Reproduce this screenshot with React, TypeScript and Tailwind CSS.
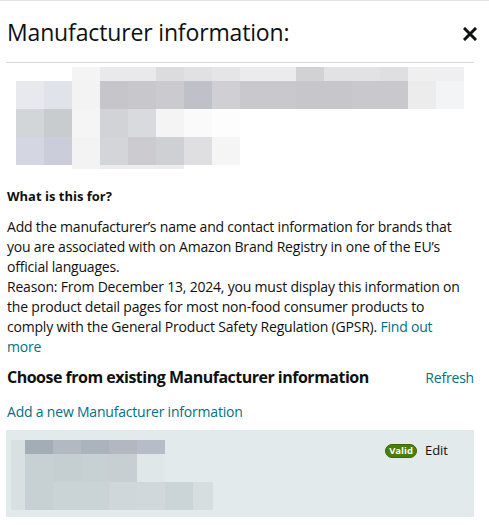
import React from 'react';

type Cell = { w: number; c: string };

// redacted image / text blocks, row by row
const topMosaic: { h: number; offset: number; cells: Cell[] }[] = [
  {
    h: 14,
    offset: 72,
    cells: [
      { w: 28, c: '#f4f4f4' },
      { w: 56, c: '#e9e9eb' },
      { w: 28, c: '#dcdcde' },
      { w: 28, c: '#e1e1e3' },
      { w: 28, c: '#e5e5e7' },
      { w: 56, c: '#ebebed' },
      { w: 28, c: '#d2d2d4' },
      { w: 56, c: '#e2e2e4' },
      { w: 28, c: '#dfdfe1' },
      { w: 28, c: '#efefef' },
      { w: 28, c: '#efeff1' },
    ],
  },
  {
    h: 28,
    offset: 16,
    cells: [
      { w: 28, c: '#e8e9ee' },
      { w: 28, c: '#e1e3eb' },
      { w: 28, c: '#f3f3f3' },
      { w: 28, c: '#c6c6ca' },
      { w: 28, c: '#c8c8cc' },
      { w: 28, c: '#cbcbcf' },
      { w: 28, c: '#c0c0c8' },
      { w: 28, c: '#d0d0d4' },
      { w: 28, c: '#c9c9cd' },
      { w: 28, c: '#c9c9cd' },
      { w: 28, c: '#c7c7cb' },
      { w: 28, c: '#c7c7cb' },
      { w: 28, c: '#c9c9cd' },
      { w: 28, c: '#c9c9cd' },
      { w: 28, c: '#ececec' },
      { w: 28, c: '#f3f4f6' },
    ],
  },
  {
    h: 28,
    offset: 16,
    cells: [
      { w: 28, c: '#d2d6d9' },
      { w: 28, c: '#c8cccf' },
      { w: 28, c: '#f5f5f5' },
      { w: 28, c: '#d2d3d7' },
      { w: 28, c: '#d9dadd' },
      { w: 28, c: '#f4f4f4' },
      { w: 28, c: '#fafafa' },
      { w: 28, c: '#fdfdfd' },
    ],
  },
  {
    h: 28,
    offset: 16,
    cells: [
      { w: 28, c: '#d4d6e2' },
      { w: 28, c: '#cbcddb' },
      { w: 28, c: '#f3f3f3' },
      { w: 28, c: '#d4d5d9' },
      { w: 28, c: '#ccccd0' },
      { w: 28, c: '#cfd0d4' },
      { w: 28, c: '#dfdfe1' },
      { w: 28, c: '#f5f5f5' },
    ],
  },
  {
    h: 4,
    offset: 72,
    cells: [
      { w: 28, c: '#f3f3f3' },
      { w: 84, c: '#ededed' },
    ],
  },
];

const cardMosaic: Cell[][] = [
  [
    { w: 14, c: '#d8e0e0' },
    { w: 28, c: '#a3adb5' },
    { w: 28, c: '#b2b9c1' },
    { w: 28, c: '#abb3bd' },
    { w: 28, c: '#b3b7bf' },
    { w: 28, c: '#b6bdc9' },
  ],
  [
    { w: 14, c: '#d8e0e2' },
    { w: 28, c: '#c7d0d3' },
    { w: 28, c: '#c5ced1' },
    { w: 28, c: '#c7d0d3' },
    { w: 28, c: '#c7cfd2' },
    { w: 28, c: '#dfe7e9' },
  ],
  [
    { w: 14, c: '#d8e0e2' },
    { w: 28, c: '#c7d0d3' },
    { w: 56, c: '#cad3d6' },
    { w: 28, c: '#cfd7da' },
    { w: 28, c: '#d0d8db' },
    { w: 28, c: '#cbd4d7' },
    { w: 20, c: '#d6dee0' },
  ],
];

function MosaicRow({ cells, h }: { cells: Cell[]; h: number }) {
  return (
    <div className="flex">
      {cells.map((cell, i) => (
        <div key={i} style={{ width: cell.w, height: h, background: cell.c }} />
      ))}
    </div>
  );
}

export default function App() {
  return (
    <div
      className="w-[489px] h-[525px] overflow-hidden bg-white border-t border-[#e3e3e3] text-[#0f1111]"
      style={{ fontFamily: '"Open Sans", "Noto Sans", Arial, sans-serif' }}
    >
      <div className="w-[468px] ml-[6px]">
        {/* header */}
        <div className="flex items-center justify-between pt-[15px] pb-[14px] pl-[1px]">
          <h1 className="text-[23px] leading-[32px] font-normal tracking-[-0.15px]">Manufacturer information:</h1>
          <svg width="14" height="14" viewBox="0 0 14 14" className="mr-[-3px] mt-[4px]">
            <path d="M2 2 L12 12 M12 2 L2 12" stroke="#0f1111" strokeWidth="3" strokeLinecap="square" />
          </svg>
        </div>
        <div className="border-t border-[#d5d9d9]" />

        {/* redacted preview */}
        <div className="mt-[4px] flex flex-col">
          {topMosaic.map((row, i) => (
            <div key={i} style={{ paddingLeft: row.offset - 6 }}>
              <MosaicRow cells={row.cells} h={row.h} />
            </div>
          ))}
        </div>

        {/* description */}
        <div className="pl-[1px]">
          <h3 className="mt-[19px] text-[13px] leading-[16px] font-bold">What is this for?</h3>
          <p className="mt-[13px] w-[456px] text-[14px] leading-[20px] tracking-[-0.2px]">
            Add the manufacturer’s name and contact information for brands that you are associated with on Amazon
            Brand Registry in one of the EU’s official languages.
            <br />
            Reason: From December 13, 2024, you must display this information on the product detail pages for most
            non-food consumer products to comply with the General Product Safety Regulation (GPSR).{' '}
            <a className="text-[#007185] cursor-pointer">Find out more</a>
          </p>

          <div className="mt-[9px] flex items-center justify-between">
            <h2 className="text-[16px] leading-[22px] font-bold tracking-[-0.5px]">
              Choose from existing Manufacturer information
            </h2>
            <a className="text-[14px] text-[#007185] tracking-[-0.2px] cursor-pointer">Refresh</a>
          </div>

          <a className="block mt-[14px] text-[14px] leading-[20px] text-[#007185] tracking-[-0.2px] cursor-pointer">
            Add a new Manufacturer information
          </a>
        </div>

        {/* existing entry */}
        <div className="mt-[8px] bg-[#e2eaeb] flex justify-between pl-[5px] pt-[10px] pb-[7px] pr-[26px]">
          <div className="flex flex-col">
            {cardMosaic.map((row, i) => (
              <MosaicRow key={i} cells={row} h={i === 0 ? 14 : 28} />
            ))}
          </div>
          <div className="flex items-start gap-[8px] pt-[3px]">
            <span className="mt-[1px] rounded-full bg-[#4a7e0b] border border-[#3b6a00] text-white text-[9.5px] leading-[10px] font-bold px-[3px] py-[1px]">
              Valid
            </span>
            <span className="text-[13px] leading-[15px]">Edit</span>
          </div>
        </div>
      </div>
    </div>
  );
}
